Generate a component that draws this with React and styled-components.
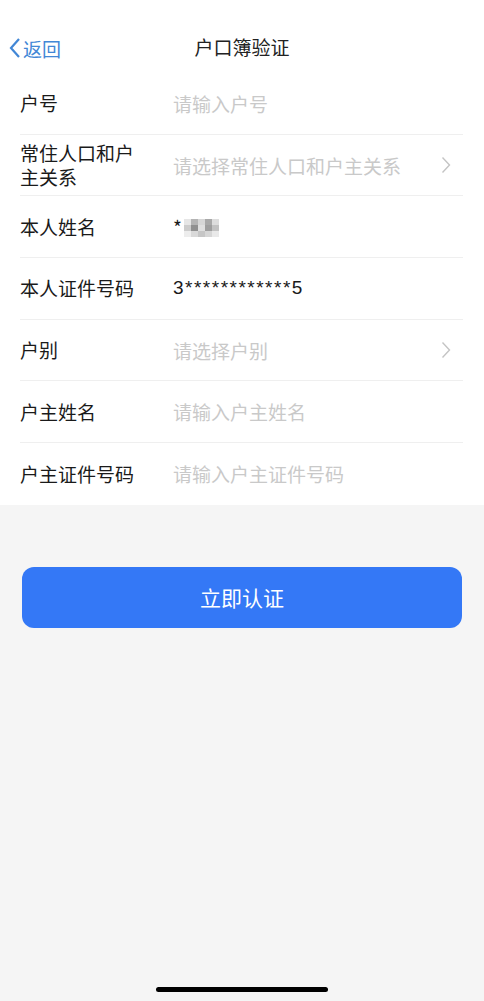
import React from "react";
import styled, { createGlobalStyle } from "styled-components";

const GlobalStyle = createGlobalStyle`
  html, body {
    margin: 0;
    padding: 0;
    background: #f5f5f5;
  }
  body {
    font-family: "Noto Sans CJK SC", "Noto Sans", sans-serif;
  }
`;

const Page = styled.div`
  width: 484px;
  height: 1001px;
  display: flex;
  flex-direction: column;
  background: #f5f5f5;
  overflow: hidden;
`;

const Top = styled.div`
  background: #fff;
  padding-top: 26px;
`;

const NavBar = styled.div`
  height: 40px;
  display: flex;
  align-items: center;
  justify-content: center;
  position: relative;
`;

const Back = styled.div`
  position: absolute;
  left: 9px;
  top: 0;
  height: 100%;
  display: flex;
  align-items: center;
  gap: 2px;
  color: #4287d6;
  font-size: 19px;
  padding-top: 2px;
`;

const Title = styled.div`
  font-size: 19px;
  color: #222;
`;

const List = styled.div`
  padding: 7px 21px 0 20px;
`;

const Row = styled.div`
  height: 61.7px;
  display: flex;
  align-items: center;
  border-bottom: ${(p) => (p.last ? "none" : "1px solid #efefef")};
  box-sizing: border-box;
`;

const Label = styled.div`
  flex: 0 0 153px;
  box-sizing: border-box;
  padding-right: 30px;
  font-size: 19px;
  line-height: 24px;
  color: #1a1a1a;
`;

const Value = styled.div`
  flex: 1;
  font-size: 19px;
  color: ${(p) => (p.placeholder ? "#c9c9c9" : "#1a1a1a")};
  display: flex;
  align-items: center;
  letter-spacing: ${(p) => (p.mono ? "1.5px" : "0")};
  font-family: ${(p) =>
    p.mono ? '"Liberation Sans", "Noto Sans CJK SC", sans-serif' : "inherit"};
`;

const Chevron = styled.svg`
  width: 10px;
  height: 18px;
  margin-right: 12px;
`;

const Mosaic = styled.span`
  display: inline-grid;
  grid-template-columns: repeat(5, 7px);
  grid-template-rows: repeat(3, 6px);
  margin-left: 2px;
  margin-top: 2px;
  opacity: 0.85;
`;

const Cell = styled.span`
  background: ${(p) => p.c};
`;

const ButtonWrap = styled.div`
  padding: 62px 22px 0 22px;
`;

const Button = styled.button`
  width: 100%;
  height: 61px;
  border: none;
  border-radius: 12px;
  background: #3478f6;
  color: #fff;
  font-size: 21px;
  font-family: inherit;
`;

const Spacer = styled.div`
  flex: 1;
`;

const HomeBar = styled.div`
  align-self: center;
  width: 172px;
  height: 5px;
  border-radius: 3px;
  background: #000;
  margin-bottom: 9px;
`;

const ChevronIcon = () => (
  <Chevron viewBox="0 0 10 18">
    <path d="M1.5 1.5 L8.5 9 L1.5 16.5" fill="none" stroke="#c4c4c4" strokeWidth="1.4" />
  </Chevron>
);

const mosaicColors = [
  "#e2e2e2", "#a8a8a8", "#cfcfcf", "#9a9a9a", "#d8d8d8",
  "#c4c4c4", "#7d7d7d", "#dadada", "#8e8e8e", "#b8b8b8",
  "#ebebeb", "#d3d3d3", "#bdbdbd", "#d0d0d0", "#e6e6e6",
];

const rows = [
  { label: "户号", value: "请输入户号", placeholder: true },
  { label: "常住人口和户主关系", value: "请选择常住人口和户主关系", placeholder: true, arrow: true },
  { label: "本人姓名", name: true },
  { label: "本人证件号码", value: "3************5", mono: true },
  { label: "户别", value: "请选择户别", placeholder: true, arrow: true },
  { label: "户主姓名", value: "请输入户主姓名", placeholder: true },
  { label: "户主证件号码", value: "请输入户主证件号码", placeholder: true },
];

export default function App() {
  return (
    <Page>
      <GlobalStyle />
      <Top>
        <NavBar>
          <Back>
            <svg width="12" height="22" viewBox="0 0 12 22">
              <path d="M10 2 L2 11 L10 20" fill="none" stroke="#4287d6" strokeWidth="2.2" />
            </svg>
            返回
          </Back>
          <Title>户口簿验证</Title>
        </NavBar>
        <List>
          {rows.map((r, i) => (
            <Row key={r.label} last={i === rows.length - 1}>
              <Label>{r.label}</Label>
              <Value placeholder={r.placeholder} mono={r.mono}>
                {r.name ? (
                  <>
                    *
                    <Mosaic>
                      {mosaicColors.map((c, j) => (
                        <Cell key={j} c={c} />
                      ))}
                    </Mosaic>
                  </>
                ) : (
                  r.value
                )}
              </Value>
              {r.arrow && <ChevronIcon />}
            </Row>
          ))}
        </List>
      </Top>
      <ButtonWrap>
        <Button>立即认证</Button>
      </ButtonWrap>
      <Spacer />
      <HomeBar />
    </Page>
  );
}
